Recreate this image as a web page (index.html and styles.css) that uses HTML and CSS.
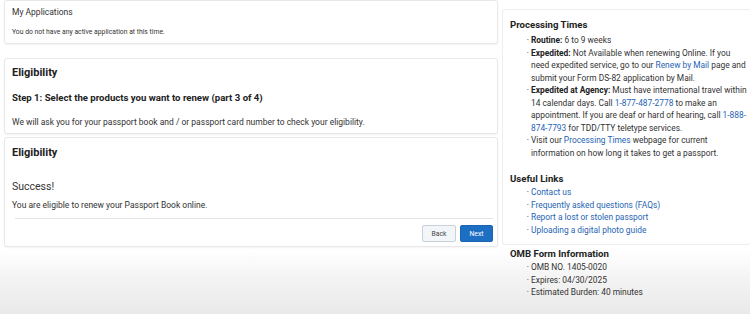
FILE: index.html
```html
<!DOCTYPE html>
<html>
<head>
<meta charset="utf-8">
<link rel="stylesheet" href="styles.css">
</head>
<body>
<div class="page">
  <div class="main">
    <div class="card apps">
      <div class="apps-title">My Applications</div>
      <div class="apps-note">You do not have any active application at this time.</div>
    </div>
    <div class="card step">
      <h2 class="card-title">Eligibility</h2>
      <h3 class="step-title">Step 1: Select the products you want to renew (part 3 of 4)</h3>
      <p class="step-text">We will ask you for your passport book and / or passport card number to check your eligibility.</p>
    </div>
    <div class="card result">
      <h2 class="card-title">Eligibility</h2>
      <div class="success">Success!</div>
      <p class="result-text">You are eligible to renew your Passport Book online.</p>
      <div class="actions">
        <button class="btn btn-back">Back</button>
        <button class="btn btn-next">Next</button>
      </div>
    </div>
  </div>
  <div class="side">
    <div class="side-card">
      <h4 class="side-title">Processing Times</h4>
      <ul class="side-list">
        <li><b>Routine:</b> 6 to 9 weeks</li>
        <li><b>Expedited:</b> Not Available when renewing Online. If you need expedited service, go to our <a>Renew by Mail</a> page and submit your Form DS-82 application by Mail.</li>
        <li><b>Expedited at Agency:</b> Must have international travel within 14 calendar days. Call <a>1-877-487-2778</a> to make an appointment. If you are deaf or hard of hearing, call <a>1-888-874-7793</a> for TDD/TTY teletype services.</li>
        <li>Visit our <a>Processing Times</a> webpage for current information on how long it takes to get a passport.</li>
      </ul>
      <h4 class="side-title links-title">Useful Links</h4>
      <ul class="side-list links-list">
        <li><a>Contact us</a></li>
        <li><a>Frequently asked questions (FAQs)</a></li>
        <li><a>Report a lost or stolen passport</a></li>
        <li><a>Uploading a digital photo guide</a></li>
      </ul>
    </div>
    <h4 class="side-title omb-title">OMB Form Information</h4>
    <ul class="side-list omb-list">
      <li>OMB NO. 1405-0020</li>
      <li>Expires: 04/30/2025</li>
      <li>Estimated Burden: 40 minutes</li>
    </ul>
  </div>
</div>
</body>
</html>
```

FILE: styles.css
```css
* { box-sizing: border-box; }
html, body { margin: 0; padding: 0; }
body {
  width: 750px;
  height: 314px;
  overflow: hidden;
  font-family: Roboto, "Liberation Sans", Arial, sans-serif;
  color: #222;
  background: linear-gradient(to bottom, #ffffff 0, #ffffff 250px, #f3f3f3 280px, #e9e9e9 314px);
}
.page {
  display: flex;
  align-items: flex-start;
  padding: 0 0 0 4px;
}
.main {
  width: 494px;
  flex: none;
  display: flex;
  flex-direction: column;
}
.card {
  background: #fff;
  border: 1px solid #e8e8e8;
  border-radius: 3px;
  box-shadow: 0 1px 2px rgba(0,0,0,0.05);
}
.apps {
  height: 44px;
  padding: 5px 7px 0 7px;
}
.apps-title { font-size: 8.5px; line-height: 12px; color: #333; }
.apps-note { font-size: 6.8px; line-height: 10px; margin-top: 9px; color: #333; }
.step {
  margin-top: 14px;
  height: 76px;
  padding: 7px 7px 0 7px;
}
.card-title {
  margin: 0;
  font-size: 11px;
  line-height: 14px;
  font-weight: 700;
  color: #222;
}
.step-title {
  margin: 12px 0 0 0;
  font-size: 9.6px;
  line-height: 12px;
  font-weight: 700;
  color: #222;
}
.step-text {
  margin: 13px 0 0 0;
  font-size: 8.5px;
  line-height: 10px;
  color: #333;
}
.result {
  margin-top: 3px;
  height: 110px;
  padding: 8px 4px 0 7px;
}
.success {
  margin-top: 20px;
  font-size: 10.5px;
  line-height: 13px;
  color: #333;
}
.result-text {
  margin: 7px 0 0 0;
  font-size: 8.5px;
  line-height: 10px;
  color: #333;
}
.actions {
  margin-top: 8px;
  margin-left: 3px;
  border-top: 1px solid #e4e4e4;
  display: flex;
  justify-content: flex-end;
  gap: 4px;
  padding-top: 6px;
}
.btn {
  height: 17px;
  font-family: inherit;
  font-size: 6.8px;
  border-radius: 2px;
  padding: 0;
  cursor: pointer;
}
.btn-back {
  width: 34px;
  background: #f3f6f9;
  border: 1px solid #c9d0d8;
  color: #444;
}
.btn-next {
  width: 33px;
  background: #1d6fc4;
  border: 1px solid #1a64b2;
  color: #fff;
}
.side {
  width: 249px;
  flex: none;
  margin-left: 4px;
  padding-top: 9px;
}
.side-card {
  background: #fff;
  border: 1px solid #eeeeee;
  border-radius: 3px;
  padding: 9px 0 6px 7px;
  height: 236px;
}
.side-title {
  margin: 0;
  font-size: 9.6px;
  line-height: 12px;
  font-weight: 700;
  color: #222;
}
.links-title { margin-top: 14px; }
.omb-title { margin: 3px 0 0 8px; }
.side-list {
  list-style-type: "\00b7\00a0";
  list-style-position: outside;
  margin: 3px 0 0 0;
  padding: 0 0 0 21px;
  font-size: 8.4px;
  line-height: 12.5px;
  color: #333;
}
.links-list { margin-top: 1px; }
.omb-list { margin-top: 1px; padding-left: 29px; }
.side-list li::marker { color: #444; }
.side-list b { font-weight: 700; color: #222; }
.side-list a { color: #1f64b4; }
```
